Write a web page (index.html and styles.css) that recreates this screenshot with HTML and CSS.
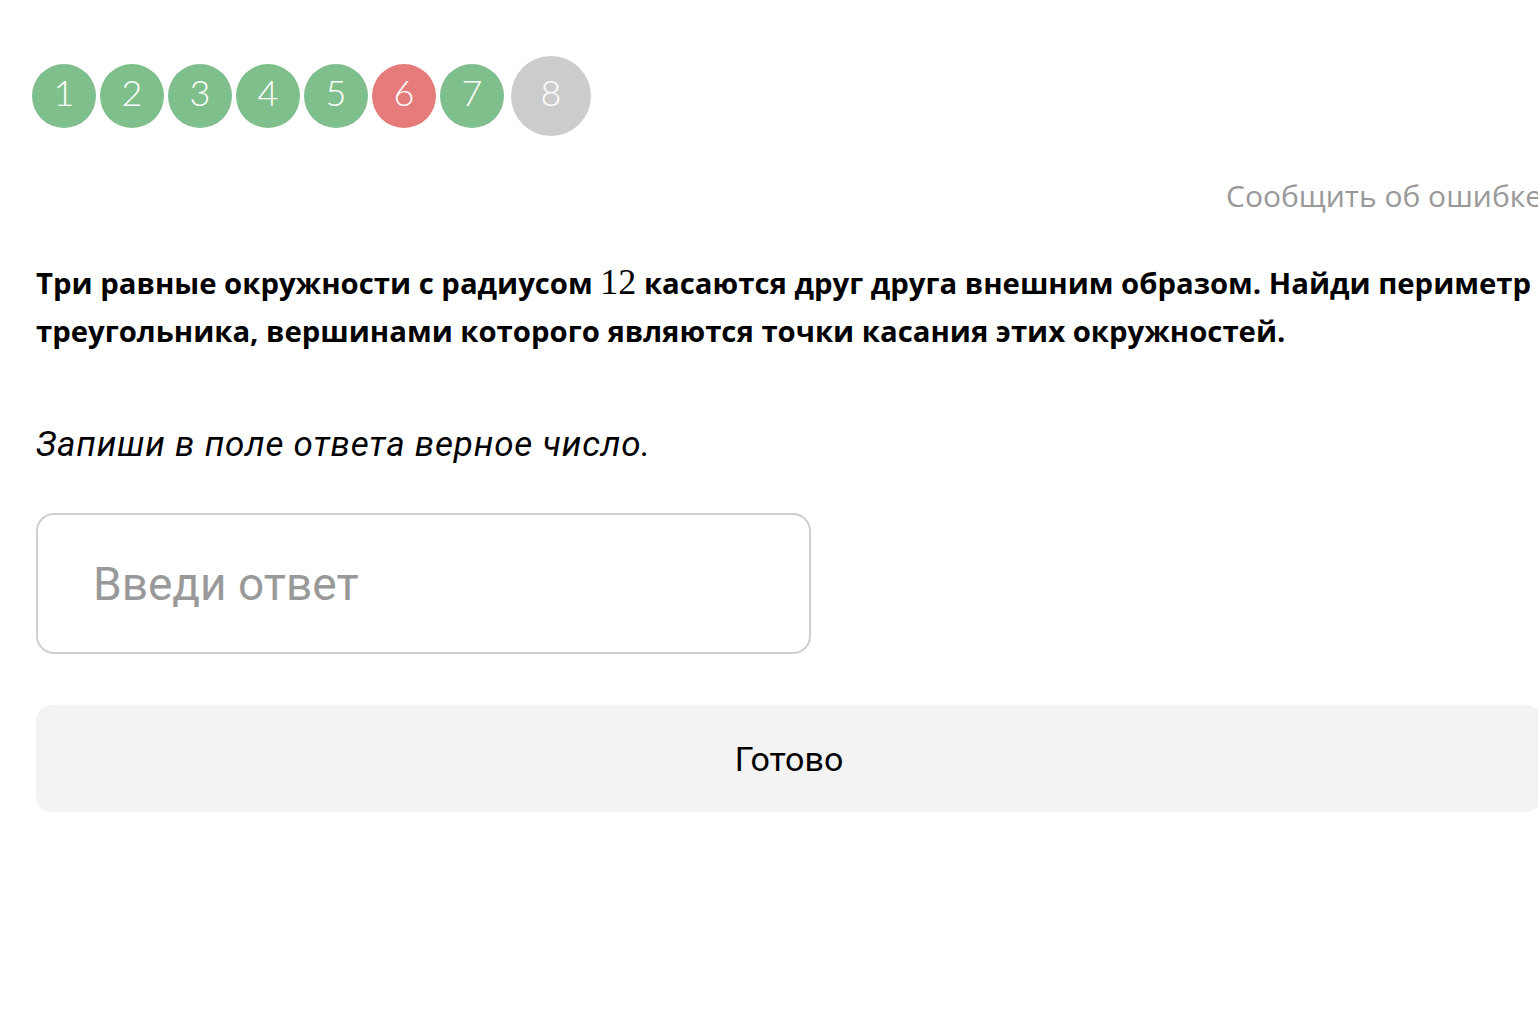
FILE: index.html
```html
<!DOCTYPE html>
<html lang="ru">
<head>
    <meta charset="UTF-8">
    <title>Задание 8</title>
    <link rel="stylesheet" href="styles.css">
</head>
<body>
<div class="task">
    <div class="steps">
        <span class="step done">1</span>
        <span class="step done">2</span>
        <span class="step done">3</span>
        <span class="step done">4</span>
        <span class="step done">5</span>
        <span class="step wrong">6</span>
        <span class="step done">7</span>
        <span class="step current">8</span>
    </div>

    <div class="report_row">
        <a class="report" href="#">Сообщить об ошибке</a>
    </div>

    <p class="question">Три равные окружности с радиусом <span class="math">12</span> касаются друг друга внешним образом. Найди периметр треугольника, вершинами которого являются точки касания этих окружностей.</p>

    <p class="hint">Запиши в поле ответа верное число.</p>

    <input class="answer" type="text" placeholder="Введи ответ">

    <button class="submit">Готово</button>
</div>
</body>
</html>
```

FILE: styles.css
```css
body{
    margin: 0;
    overflow: hidden;
    background: #fff;
    font-family: Roboto, "Noto Sans", sans-serif;
    color: #000;
}
.task{
    width: 1506px;
    padding-left: 36px;
}
.steps{
    display: flex;
    align-items: center;
    gap: 4px;
    height: 80px;
    padding-top: 56px;
    margin-left: -4px;
}
.step{
    display: flex;
    justify-content: center;
    align-items: center;
    box-sizing: border-box;
    width: 64px;
    height: 64px;
    padding-bottom: 8px;
    border-radius: 50%;
    color: #fff;
    font-family: Lato, sans-serif;
    font-weight: 300;
    font-size: 36px;
}
.done{
    background-color: #7fbf8c;
}
.wrong{
    background-color: #e57b7b;
}
.current{
    width: 80px;
    height: 80px;
    margin-left: 3px;
    background-color: #cccccc;
}
.report_row{
    margin-top: 40px;
    height: 40px;
    padding-left: 1190px;
    white-space: nowrap;
}
.report{
    font-family: "Open Sans", sans-serif;
    font-size: 30px;
    line-height: 40px;
    color: #999;
    text-decoration: none;
}
.question{
    margin: 43px 0 0;
    font-family: "Open Sans", sans-serif;
    font-size: 29.3px;
    line-height: 48px;
    font-weight: 700;
}
.math{
    display: inline-block;
    font-family: "Liberation Serif", serif;
    font-weight: 400;
    font-size: 36px;
    line-height: 30px;
}
.hint{
    margin: 68px 0 0;
    font-size: 35px;
    line-height: 44px;
    letter-spacing: 0.8px;
    font-style: italic;
}
.answer{
    display: block;
    box-sizing: border-box;
    margin-top: 46px;
    width: 775px;
    height: 141px;
    padding: 0 0 0 55px;
    border: 2px solid #cfcfcf;
    border-radius: 18px;
    font-family: inherit;
    font-size: 46px;
    color: #000;
    outline: none;
}
.answer::placeholder{
    color: #999;
}
.submit{
    display: block;
    margin-top: 51px;
    width: 1506px;
    height: 107px;
    border: 0;
    border-radius: 16px;
    background-color: #f3f3f3;
    font-family: inherit;
    font-size: 34px;
    color: #000;
}
```
